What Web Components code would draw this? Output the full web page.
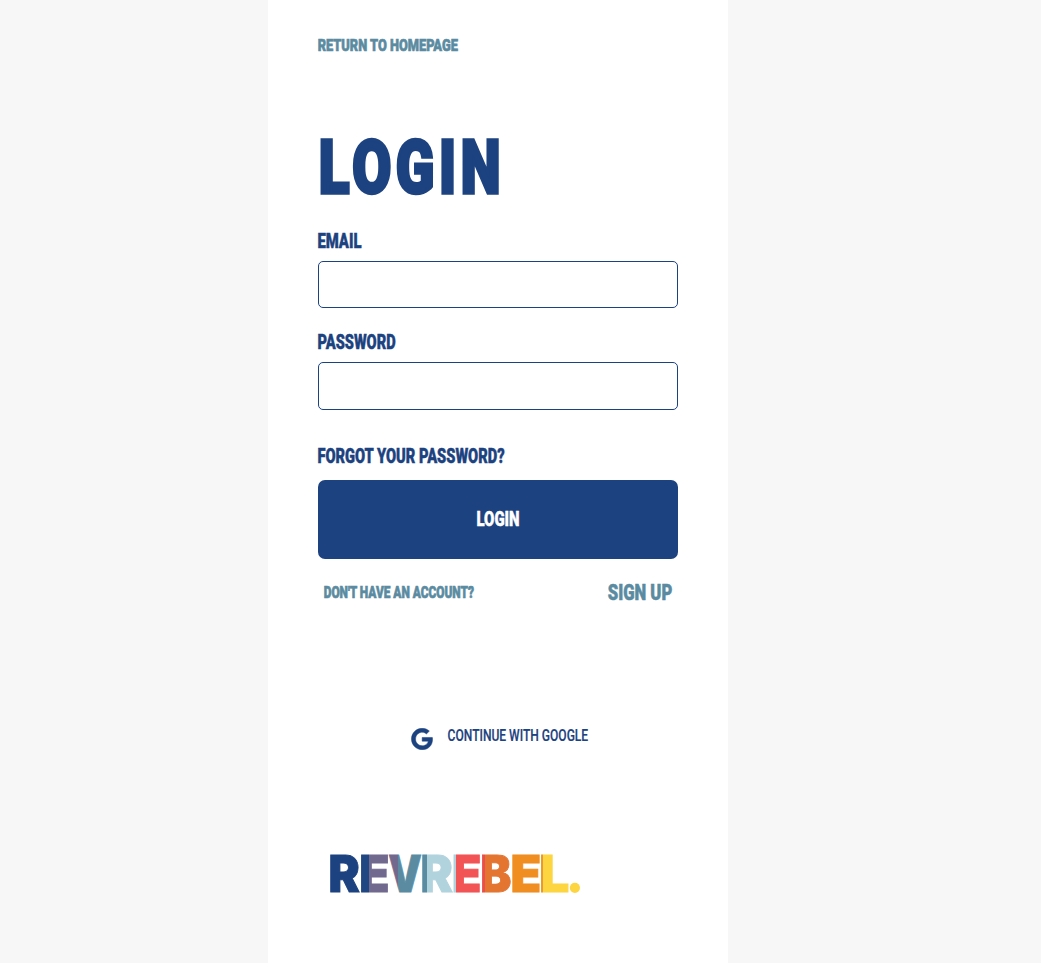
<!DOCTYPE html>
<html lang="en">
<head>
<meta charset="utf-8">
<title>Login</title>
<style>
html,body{margin:0;height:100%;background:#f7f7f7;font-family:Roboto,"Liberation Sans",sans-serif}
body{overflow:hidden}
</style>
</head>
<body>
<login-page></login-page>
<script>
const pen = document.createElement('canvas').getContext('2d');
function inkOf(text, weight, family) {
  pen.font = `${weight} 100px ${family}`;
  const m = pen.measureText(text);
  return { left: -m.actualBoundingBoxLeft, width: m.actualBoundingBoxRight + m.actualBoundingBoxLeft };
}

/* Condensed caps label: "w" is the label's width, "cap" its capital height. */
class CondText extends HTMLElement {
  connectedCallback() {
    const root = this.attachShadow({ mode: 'open' });
    const w = +this.getAttribute('w'), cap = +this.getAttribute('cap');
    const weight = this.getAttribute('weight') || 900;
    const stroke = +(this.getAttribute('stroke') || 0);
    const track = +(this.getAttribute('track') || 0);
    const text = this.textContent.trim();
    const inset = stroke > 1 ? stroke : 0;
    const size = (cap - inset) / 0.711;
    const ink = inkOf(text, weight, 'Roboto');
    const k = size / 100;
    const sx = (w - stroke) / (ink.width * k + track * (text.length - 1));
    root.innerHTML = `<style>
      :host{display:block;flex:none;width:${w}px;height:${cap}px}
      svg{display:block;overflow:visible}
      text{font:${weight} ${size}px Roboto,"Liberation Sans",sans-serif;letter-spacing:${track}px;fill:currentColor;stroke:currentColor;stroke-width:${stroke}px;vector-effect:non-scaling-stroke}
    </style><svg width="${w}" height="${cap}"><text y="${cap - inset / 2}" transform="translate(${stroke / 2 - ink.left * k * sx} 0) scale(${sx} 1)"></text></svg>`;
    root.querySelector('text').textContent = text;
  }
}
customElements.define('cond-text', CondText);

class TextField extends HTMLElement {
  constructor() {
    super();
    this.attachShadow({ mode: 'open' }).innerHTML = `<style>
      :host{display:flex;flex-direction:column;gap:13px}
      input{box-sizing:border-box;width:100%;height:var(--field-height,47px);margin:0;padding:0 12px;border:1px solid #1c4280;border-radius:5px;background:#fff;outline:0;font:16px Roboto,sans-serif;color:#1c4280}
    </style><slot></slot><input>`;
  }
  connectedCallback() { this.shadowRoot.querySelector('input').type = this.getAttribute('type') || 'text'; }
}
customElements.define('text-field', TextField);

class PrimaryButton extends HTMLElement {
  constructor() {
    super();
    this.attachShadow({ mode: 'open' }).innerHTML = `<style>
      :host{display:block}
      button{display:flex;align-items:center;justify-content:center;width:100%;height:79px;padding:0 1px 1px 0;border:0;border-radius:7px;background:#1c4280;color:#fff}
    </style><button><slot></slot></button>`;
  }
}
customElements.define('primary-button', PrimaryButton);

class GoogleButton extends HTMLElement {
  constructor() {
    super();
    this.attachShadow({ mode: 'open' }).innerHTML = `<style>
      :host{display:flex;align-items:flex-start;gap:14.5px}
      svg{display:block;flex:none}
      ::slotted(*){margin-top:1px}
    </style><svg width="22" height="22" viewBox="-7 1 502 510"><path fill="#1c4280" stroke="#1c4280" stroke-width="12" stroke-linejoin="round" d="M488 261.8C488 403.3 391.1 504 248 504 110.8 504 0 393.2 0 256S110.8 8 248 8c66.8 0 123 24.5 166.3 64.9l-67.5 64.9C258.5 52.6 94.3 116.6 94.3 256c0 86.5 69.1 156.6 153.7 156.6 98.2 0 135-70.4 140.8-106.9H248v-85.3h236.1c2.3 12.7 3.9 24.9 3.9 41.4z"/></svg><slot></slot>`;
  }
}
customElements.define('google-button', GoogleButton);

class BrandLogo extends HTMLElement {
  connectedCallback() {
    const root = this.attachShadow({ mode: 'open' });
    const letters = [
      ['R', 0, 30, '#1c4280'],
      ['E', 30.7, 58.3, '#72698f', 39.2, '#204781'],
      ['V', 58.6, 91.6, '#5b8ba1', 68.3, '#72698f'],
      ['R', 92, 123, '#b1d3de', 97.3, '#5b8ba1'],
      ['E', 123.2, 150.2, '#f25455', 125.7, '#b1d3de'],
      ['B', 151.7, 181, '#e37530', 154.8, '#e9504c'],
      ['E', 182, 210, '#f08e21'],
      ['L', 210.8, 238.6, '#fcd540', 212.6, '#e99a28']
    ];
    const stroke = 0.9, size = (37.4 - stroke) / 0.727;
    let defs = '', out = '';
    letters.forEach(([ch, a, b, fill, cut, under], i) => {
      const ink = inkOf(ch, 900, 'Inter'), k = size / 100;
      const sx = (b - a - stroke) / (ink.width * k);
      const tx = a + stroke / 2 - ink.left * k * sx;
      let paint = fill;
      if (cut) {
        const ux = x => (x - tx) / sx;
        defs += `<linearGradient id="g${i}" gradientUnits="userSpaceOnUse" x1="${ux(a)}" x2="${ux(b)}" y1="0" y2="0"><stop offset="${(cut - a) / (b - a)}" stop-color="${under}"/><stop offset="${(cut - a) / (b - a)}" stop-color="${fill}"/></linearGradient>`;
        paint = `url(#g${i})`;
      }
      out += `<text y="37.3" transform="translate(${tx} 0) scale(${sx} 1)" fill="${paint}" stroke="${paint}">${ch}</text>`;
    });
    root.innerHTML = `<style>:host{display:block}svg{display:block;overflow:visible}text{font:900 ${size}px Inter,sans-serif;stroke-width:${stroke}px}</style>
      <svg width="250" height="38"><defs>${defs}</defs>${out}<circle cx="244.9" cy="32.8" r="5.1" fill="#fcd540"/></svg>`;
  }
}
customElements.define('brand-logo', BrandLogo);

class LoginPage extends HTMLElement {
  constructor() {
    super();
    this.attachShadow({ mode: 'open' }).innerHTML = `<style>
      :host{display:block;height:100vh}
      main{box-sizing:border-box;width:460px;height:100%;margin-left:268px;padding:39px 50px 0;background:#fff;color:#1c4280;display:flex;flex-direction:column}
      .teal{color:#5b8ba1}
      h1{margin:87px 0 0 2px;font-size:inherit}
      .email{margin-top:40px}
      .password{margin-top:27px;--field-height:48px}
      .forgot{margin-top:39px}
      primary-button{margin-top:17px}
      .signup{display:flex;justify-content:space-between;align-items:center;margin:25px 6.5px 0 6px}
      google-button{margin:128px 0 0 93px}
      brand-logo{margin:105px 0 0 12px}
    </style>
    <main>
      <cond-text class="teal" w="140.5" cap="12" stroke=".6">RETURN TO HOMEPAGE</cond-text>
      <h1><cond-text w="179" cap="56" stroke="3" track="6">LOGIN</cond-text></h1>
      <text-field class="email"><cond-text w="43.5" cap="14" stroke=".4">EMAIL</cond-text></text-field>
      <text-field class="password" type="password"><cond-text w="77.5" cap="14" stroke=".4">PASSWORD</cond-text></text-field>
      <cond-text class="forgot" w="187" cap="14" stroke=".4">FORGOT YOUR PASSWORD?</cond-text>
      <primary-button><cond-text w="42" cap="14" stroke=".4">LOGIN</cond-text></primary-button>
      <div class="signup teal"><cond-text w="150.5" cap="12" stroke=".6">DON'T HAVE AN ACCOUNT?</cond-text><cond-text w="64" cap="16" stroke=".5">SIGN UP</cond-text></div>
      <google-button><cond-text w="140" cap="12" weight="500" stroke=".2">CONTINUE WITH GOOGLE</cond-text></google-button>
      <brand-logo></brand-logo>
    </main>`;
  }
}
customElements.define('login-page', LoginPage);
</script>
</body>
</html>
